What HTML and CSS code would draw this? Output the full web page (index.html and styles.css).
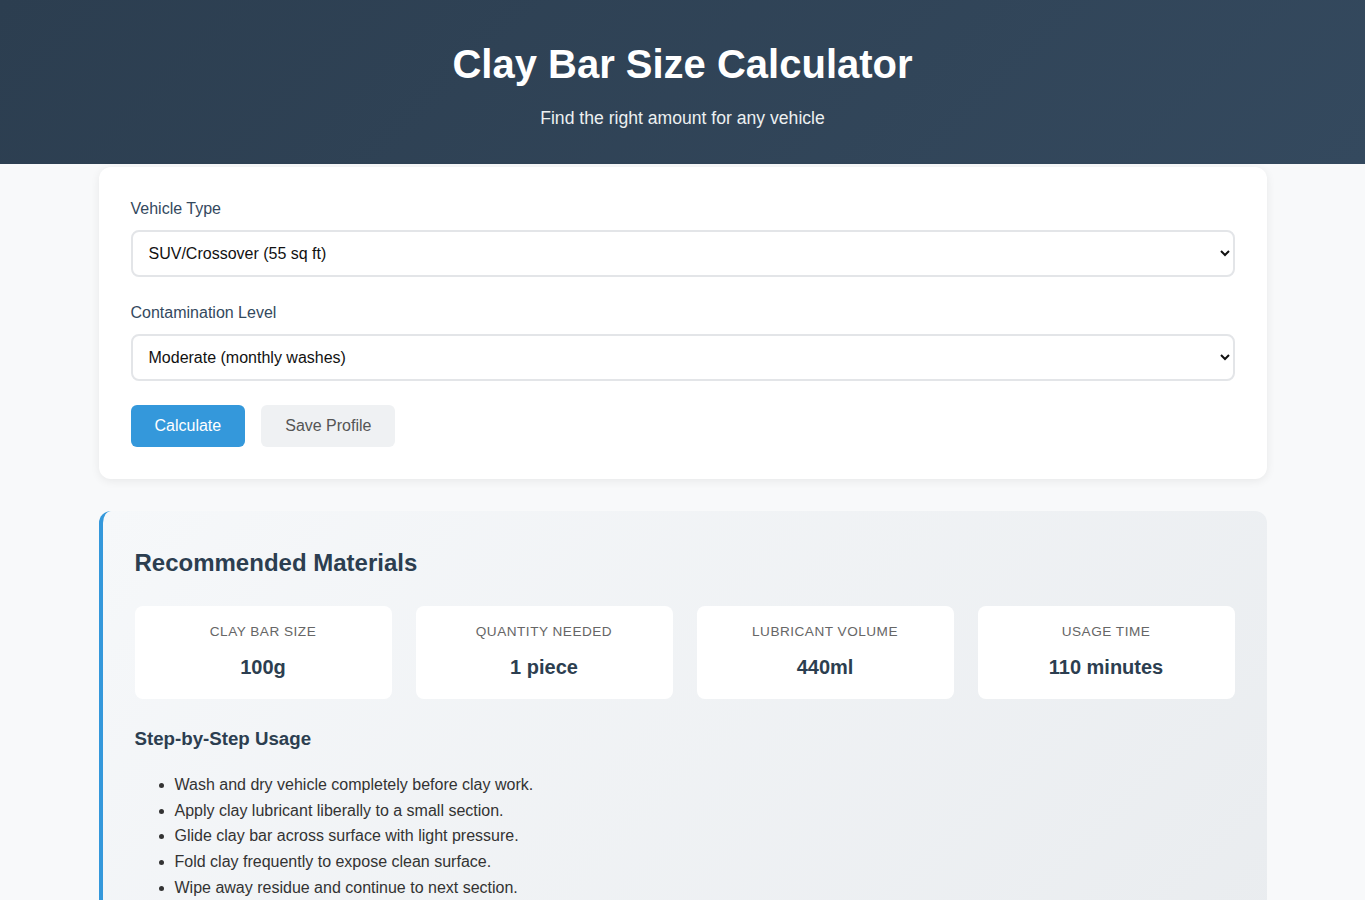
FILE: index.html
```html
<!DOCTYPE html>
<html lang="en">
<head>
    <meta charset="UTF-8">
    <meta name="viewport" content="width=device-width, initial-scale=1.0">
    <title>Clay Bar Size Calculator</title>
    <link rel="stylesheet" href="styles.css">
</head>
<body>
    <header class="header">
        <h1>Clay Bar Size Calculator</h1>
        <p class="subtitle">Find the right amount for any vehicle</p>
    </header>

    <div class="container">
        <div class="calc-card">
            <div class="form-group">
                <label for="vehicle">Vehicle Type</label>
                <select id="vehicle">
                    <option>Compact Car (40 sq ft)</option>
                    <option>Sedan (48 sq ft)</option>
                    <option selected>SUV/Crossover (55 sq ft)</option>
                    <option>Truck (65 sq ft)</option>
                </select>
            </div>

            <div class="form-group">
                <label for="contamination">Contamination Level</label>
                <select id="contamination">
                    <option>Light (weekly washes)</option>
                    <option selected>Moderate (monthly washes)</option>
                    <option>Heavy (rarely washed)</option>
                </select>
            </div>

            <div class="actions">
                <button class="btn btn-primary">Calculate</button>
                <button class="btn btn-secondary">Save Profile</button>
            </div>
        </div>

        <div class="results">
            <h2>Recommended Materials</h2>

            <div class="stats">
                <div class="stat">
                    <div class="stat-label">Clay Bar Size</div>
                    <div class="stat-value">100g</div>
                </div>
                <div class="stat">
                    <div class="stat-label">Quantity Needed</div>
                    <div class="stat-value">1 piece</div>
                </div>
                <div class="stat">
                    <div class="stat-label">Lubricant Volume</div>
                    <div class="stat-value">440ml</div>
                </div>
                <div class="stat">
                    <div class="stat-label">Usage Time</div>
                    <div class="stat-value">110 minutes</div>
                </div>
            </div>

            <h3>Step-by-Step Usage</h3>
            <ul class="steps">
                <li>Wash and dry vehicle completely before clay work.</li>
                <li>Apply clay lubricant liberally to a small section.</li>
                <li>Glide clay bar across surface with light pressure.</li>
                <li>Fold clay frequently to expose clean surface.</li>
                <li>Wipe away residue and continue to next section.</li>
                <li>Finish with a quick detailer and microfiber towel.</li>
            </ul>
        </div>
    </div>
</body>
</html>
```

FILE: styles.css
```css
body {
    font-family: "Liberation Sans", Arial, sans-serif;
    margin: 0;
    background-color: #f8f9fa;
    color: #333;
}

.header {
    background: linear-gradient(135deg, #2c3e50, #34495e);
    color: white;
    text-align: center;
    padding: 41px 20px 36px;
}

.header h1 {
    margin: 0 0 21px;
    font-size: 40px;
    line-height: 46px;
}

.subtitle {
    margin: 0;
    font-size: 17.6px;
    line-height: 20px;
    color: #ecf0f1;
}

.container {
    max-width: 1168px;
    margin: 0 auto;
    padding: 3px 0 40px;
}

.calc-card {
    background-color: white;
    border-radius: 12px;
    padding: 32px;
    box-shadow: 0 2px 10px rgba(0, 0, 0, 0.07);
    margin-bottom: 32px;
}

.form-group {
    margin-bottom: 26px;
}

.form-group label {
    display: block;
    font-size: 16px;
    line-height: 20px;
    color: #34495e;
    margin-bottom: 11px;
}

.form-group select {
    display: block;
    width: 100%;
    height: 47px;
    box-sizing: border-box;
    padding: 0 8px 0 12px;
    font-family: inherit;
    font-size: 16px;
    color: #111;
    background-color: white;
    border: 2px solid #e3e5e8;
    border-radius: 8px;
}

.actions {
    display: flex;
    gap: 16px;
    margin-top: -2px;
}

.btn {
    font-family: inherit;
    font-size: 16px;
    line-height: 18px;
    padding: 12px 24px;
    border: none;
    border-radius: 6px;
    cursor: pointer;
}

.btn-primary {
    background-color: #3498db;
    color: white;
}

.btn-secondary {
    background-color: #eff1f3;
    color: #555;
}

.results {
    background: linear-gradient(135deg, #f6f8fa 0%, #e9ecef 100%);
    border-left: 4px solid #3498db;
    border-radius: 12px;
    padding: 32px;
}

.results h2 {
    margin: 2px 0 25px;
    font-size: 24px;
    line-height: 36px;
    color: #2c3e50;
}

.stats {
    display: grid;
    grid-template-columns: repeat(4, 1fr);
    gap: 24px;
}

.stat {
    background-color: white;
    border-radius: 8px;
    text-align: center;
    padding: 18px 16px 20px;
}

.stat-label {
    font-size: 13.6px;
    line-height: 16px;
    text-transform: uppercase;
    letter-spacing: 0.5px;
    color: #666;
    margin-bottom: 15px;
}

.stat-value {
    font-size: 20px;
    line-height: 24px;
    font-weight: bold;
    color: #2c3e50;
}

.results h3 {
    margin: 29px 0 23px;
    font-size: 18.7px;
    line-height: 21px;
    color: #2c3e50;
}

.steps {
    margin: 0;
    padding-left: 40px;
    font-size: 16px;
    line-height: 25.7px;
    color: #333;
}
```
